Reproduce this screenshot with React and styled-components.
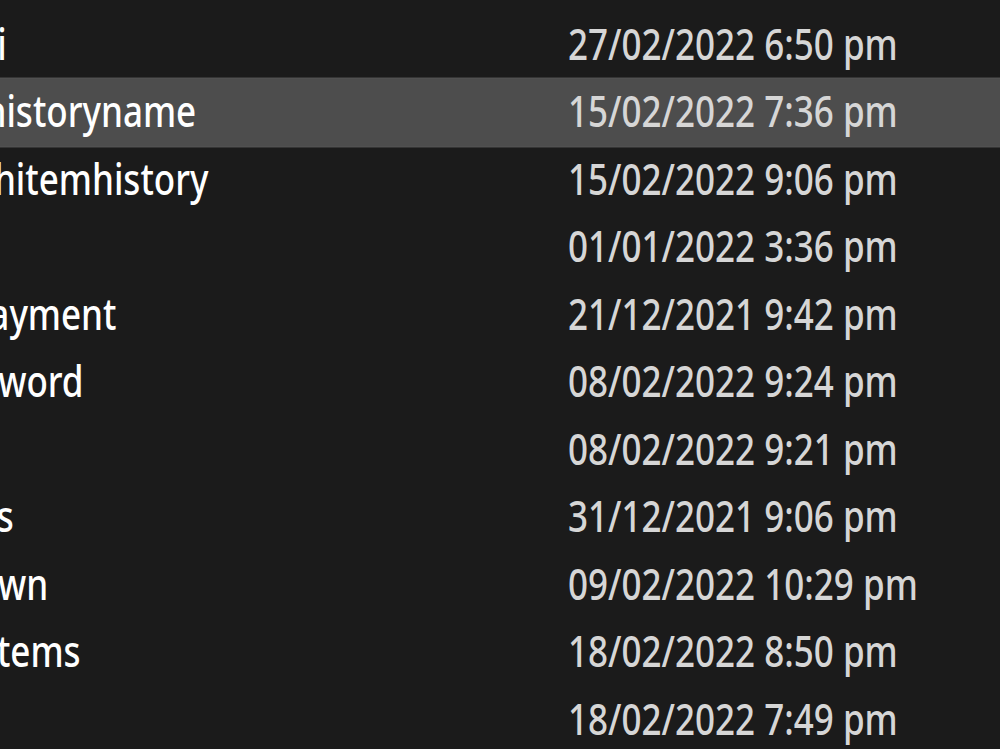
import React from "react";
import styled, { createGlobalStyle } from "styled-components";

const Global = createGlobalStyle`
  html, body { margin: 0; padding: 0; background: #1b1b1b; }
  body { font-family: "Noto Sans", "Open Sans", sans-serif; }
`;

const Pane = styled.div`
  width: 1000px;
  height: 749px;
  overflow: hidden;
  background: #1b1b1b;
  padding-top: 11px;
  box-sizing: border-box;
`;

const Row = styled.div`
  display: grid;
  grid-template-columns: 568px 1fr;
  height: 67.5px;
  align-items: center;
  background: ${(p) => (p.$selected ? "#4d4d4d" : "transparent")};
  box-shadow: ${(p) => (p.$selected ? "0 0 0 1.5px #515151" : "none")};
  font-size: 42.7px;
  font-weight: 500;
  line-height: 67.5px;
`;

const NameCell = styled.div`
  display: flex;
  justify-content: flex-end;
  width: ${(p) => p.$end}px;
  white-space: nowrap;
  color: #ffffff;
`;

const DateCell = styled.div`
  display: flex;
  white-space: nowrap;
  color: #d6d6d6;
`;

const Squeezed = styled.span`
  display: inline-block;
  transform: scaleX(0.82);
  transform-origin: ${(p) => (p.$anchor === "right" ? "right" : "left")} center;
  margin-top: -3px;
`;

const rows = [
  { name: "multi", end: 7, date: "27/02/2022 6:50 pm" },
  { name: "historyname", end: 196, date: "15/02/2022 7:36 pm", selected: true },
  { name: "searchitemhistory", end: 208, date: "15/02/2022 9:06 pm" },
  { name: "", end: 0, date: "01/01/2022 3:36 pm" },
  { name: "payment", end: 116, date: "21/12/2021 9:42 pm" },
  { name: "password", end: 84, date: "08/02/2022 9:24 pm" },
  { name: "", end: 0, date: "08/02/2022 9:21 pm" },
  { name: "users", end: 14, date: "31/12/2021 9:06 pm" },
  { name: "dropdown", end: 48, date: "09/02/2022 10:29 pm" },
  { name: "items", end: 81, date: "18/02/2022 8:50 pm" },
  { name: "", end: 0, date: "18/02/2022 7:49 pm" },
];

export default function App() {
  return (
    <>
      <Global />
      <Pane>
        {rows.map((r, i) => (
          <Row key={i} $selected={r.selected}>
            <NameCell $end={r.end}>
              {r.name && <Squeezed $anchor="right">{r.name}</Squeezed>}
            </NameCell>
            <DateCell>
              <Squeezed $anchor="left">{r.date}</Squeezed>
            </DateCell>
          </Row>
        ))}
      </Pane>
    </>
  );
}
